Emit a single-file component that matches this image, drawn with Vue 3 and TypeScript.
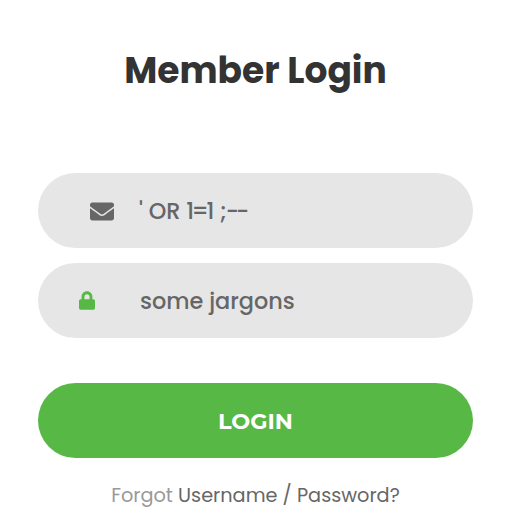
<script setup lang="ts">
const title = 'Member Login'
</script>

<template>
  <div class="page">
    <h1 class="title">{{ title }}</h1>
    <form class="form" @submit.prevent>
      <div class="field">
        <span class="icon mail">
          <svg width="24" height="19" viewBox="0 0 512 384" fill="#666">
            <path d="M502 127c4-3 10 0 10 5v204c0 26-22 48-48 48H48c-26 0-48-22-48-48V132c0-5 6-8 10-5 22 17 52 39 154 113 21 15 57 48 92 48s72-33 92-48c102-74 132-96 154-113zM256 256c23 0 57-29 74-41 133-97 143-105 174-129 6-5 8-11 8-19V48c0-26-22-48-48-48H48C22 0 0 22 0 48v19c0 8 2 14 8 19 31 24 41 32 174 129 17 12 51 41 74 41z"/>
          </svg>
        </span>
        <span class="input value" role="textbox">' OR <span class="tight">1=</span>1 <span class="semi">;</span><span class="dash">-</span>-</span>
      </div>
      <div class="field">
        <span class="icon lock">
          <svg width="16" height="19" viewBox="0 0 448 512" fill="#57b846">
            <path d="M400 224h-24v-72C376 68 308 0 224 0S72 68 72 152v72H48c-26 0-48 22-48 48v192c0 26 22 48 48 48h352c26 0 48-22 48-48V272c0-26-22-48-48-48zm-104 0H152v-72c0-40 32-72 72-72s72 32 72 72v72z"/>
          </svg>
        </span>
        <input class="input" type="text" value="some jargons" />
      </div>
      <button class="login" type="submit">LOGIN</button>
    </form>
    <p class="forgot"><span class="muted">Forgot</span> Username / Password?</p>
  </div>
</template>

<style scoped>
.page {
  width: 517px;
  height: 530px;
  box-sizing: border-box;
  padding: 46px 44px 0 38px;
  background: #fff;
  font-family: Poppins, "Open Sans", "Noto Sans", sans-serif;
  overflow: hidden;
}
.title {
  margin: 0 0 77px;
  font-size: 36px;
  line-height: 50px;
  font-weight: 700;
  color: #333;
  text-align: center;
}
.form {
  display: flex;
  flex-direction: column;
  gap: 15px;
}
.field {
  height: 75px;
  border-radius: 38px;
  background: #e6e6e6;
  display: flex;
  align-items: center;
}
.icon {
  width: 102px;
  flex: none;
  display: flex;
  justify-content: center;
  padding-left: 26px;
  box-sizing: border-box;
}
.icon.mail {
  padding-top: 2px;
}
.icon.lock {
  justify-content: flex-start;
  padding-left: 41px;
}
.input {
  flex: 1;
  min-width: 0;
  border: 0;
  background: transparent;
  outline: none;
  font: 500 22.4px Poppins, "Open Sans", sans-serif;
  color: #666;
  padding: 0;
}
.value {
  white-space: pre;
  margin-left: -1px;
}
.tight {
  letter-spacing: -2.5px;
}
.semi {
  letter-spacing: -1px;
}
.dash {
  letter-spacing: -3px;
}
.login {
  height: 75px;
  margin-top: 30px;
  border: 0;
  border-radius: 38px;
  background: #57b846;
  color: #fff;
  font: 700 22.4px Montserrat, "Open Sans", sans-serif;
}
.forgot {
  margin: 24px 0 0;
  text-align: center;
  font-size: 19.3px;
  line-height: 28px;
  color: #666;
}
.muted {
  color: #999;
}
</style>
